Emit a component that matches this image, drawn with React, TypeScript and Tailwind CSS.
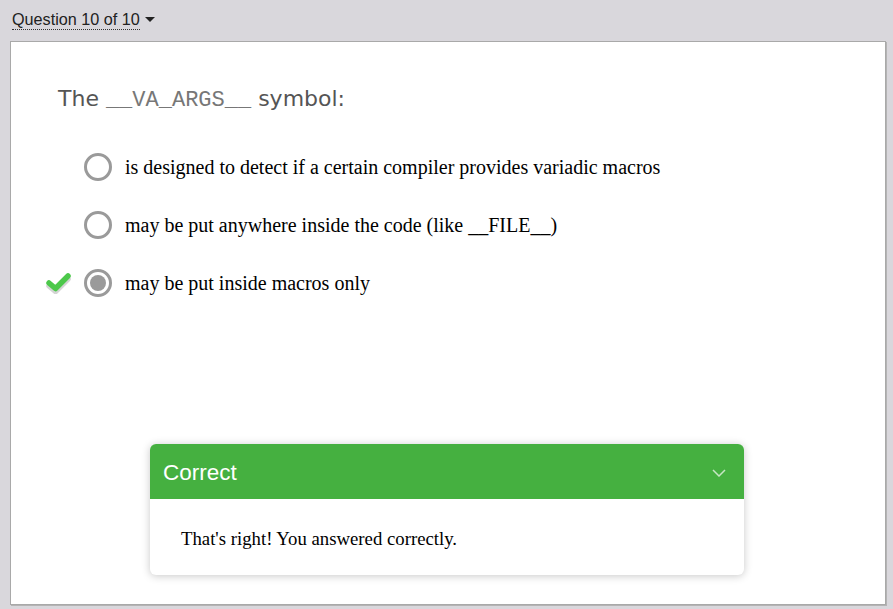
import React from "react";

const options = [
  { text: "is designed to detect if a certain compiler provides variadic macros", selected: false },
  { text: "may be put anywhere inside the code (like __FILE__)", selected: false },
  { text: "may be put inside macros only", selected: true },
];

function Check() {
  return (
    <svg width="26" height="22" viewBox="0 0 26 22">
      <path d="M3 12 L9.5 17.5 L22 5" fill="none" stroke="#d4d4d4" strokeWidth="5.5" strokeLinecap="round" strokeLinejoin="round" transform="translate(0 2)" />
      <path d="M3 11 L9.5 16.5 L22 4" fill="none" stroke="#4cc84a" strokeWidth="5.5" strokeLinecap="round" strokeLinejoin="round" />
    </svg>
  );
}

export default function App() {
  return (
    <div className="w-[893px] h-[609px] bg-[#d9d7dc] flex flex-col font-['Liberation_Sans',Arial,sans-serif] overflow-hidden">
      <div className="h-[41px] flex items-start pl-[12px] pt-[10px]">
        <span className="text-[16.2px] text-[#222] border-b border-dotted border-[#333] leading-[19px]">Question 10 of 10</span>
        <span className="ml-[5px] mt-[7px] w-0 h-0 border-l-[5px] border-r-[5px] border-t-[5px] border-l-transparent border-r-transparent border-t-[#222]" />
      </div>
      <div className="ml-[10px] w-[876px] h-[564px] bg-white border border-[#a9a9a9] shadow-[1px_1px_0_#b4b4b4] flex flex-col">
        <div className="pl-[47px] pt-[43px] text-[22px] text-[#555] font-['DejaVu_Sans',Verdana,sans-serif] leading-[28px]">
          The <span className="font-['Liberation_Mono','Courier_New',monospace] text-[#777]">__VA_ARGS__</span> symbol:
        </div>
        <div className="flex flex-col mt-[37px] gap-[29px]">
          {options.map((o) => (
            <div key={o.text} className="flex items-center h-[29px]">
              <div className="w-[73px] flex justify-end pr-[12px]">{o.selected && <Check />}</div>
              <div className="w-[28px] h-[28px] rounded-full border-[3px] border-[#9a9a9a] flex items-center justify-center">
                {o.selected && <div className="w-[16px] h-[16px] rounded-full bg-[#9a9a9a]" />}
              </div>
              <span className="ml-[13px] text-[20px] text-black font-['Liberation_Serif','Times_New_Roman',serif]">{o.text}</span>
            </div>
          ))}
        </div>
        <div className="mt-auto mb-[29px] ml-[139px] w-[594px] rounded-[6px] bg-white shadow-[0_1px_8px_rgba(0,0,0,0.22)] overflow-hidden">
          <div className="h-[55px] bg-[#45b040] flex items-center justify-between pl-[13px] pr-[18px] pt-[3px]">
            <span className="text-[22.5px] text-white">Correct</span>
            <svg width="14" height="8" viewBox="0 0 14 8">
              <path d="M1 1 L7 7 L13 1" fill="none" stroke="#c7e6c4" strokeWidth="1.5" />
            </svg>
          </div>
          <div className="h-[76px] flex items-center pl-[31px] pt-[5px] text-[18.75px] text-black font-['Liberation_Serif','Times_New_Roman',serif]">
            That's right! You answered correctly.
          </div>
        </div>
      </div>
    </div>
  );
}
